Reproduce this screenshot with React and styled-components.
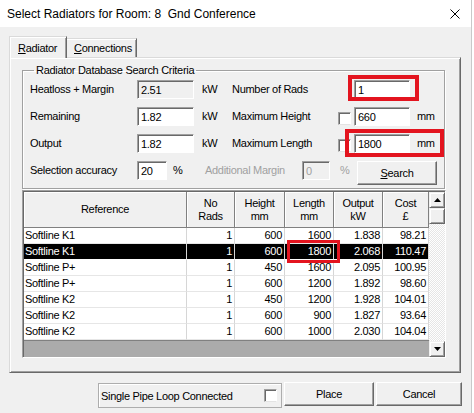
import React from 'react'
import styled, { createGlobalStyle } from 'styled-components'

const GlobalStyle = createGlobalStyle`
  html, body {
    margin: 0;
    padding: 0;
    background: #fff;
  }
  body {
    font-family: "Liberation Sans", Arial, sans-serif;
    font-size: 11px;
    letter-spacing: -0.3px;
    color: #000;
  }
`

const Window = styled.div`
  width: 472px;
  height: 413px;
  box-sizing: border-box;
  background: #f0f0f0;
  border-right: 1px solid #c9c9c9;
  display: flex;
  flex-direction: column;
  overflow: hidden;
`

const TitleBar = styled.div`
  flex: none;
  height: 27px;
  background: #fff;
  display: flex;
  align-items: center;
  justify-content: space-between;
  padding: 0 11px 0 7px;
  font-size: 12px;
  letter-spacing: 0;
  white-space: pre;
`

const Content = styled.div`
  padding: 9px 0 0 9px;
`

const TabRow = styled.div`
  display: flex;
  align-items: flex-start;
  height: 21px;
`

const Tab = styled.div`
  position: relative;
  z-index: ${p => (p.$active ? 1 : 0)};
  box-sizing: border-box;
  width: ${p => p.$w}px;
  height: ${p => (p.$active ? 22 : 19)}px;
  margin-top: ${p => (p.$active ? 0 : 2)}px;
  padding: ${p => (p.$active ? '4px 0 0 8px' : '2px 0 0 7px')};
  line-height: 14px;
  background: #f0f0f0;
  border-top: 1px solid #dadada;
  border-left: ${p => (p.$active ? '1px solid #dadada' : 'none')};
  border-right: 1px solid #696969;
  box-shadow: ${p => (p.$active ? 'inset 1px 1px 0 #fff, inset -1px 0 0 #a0a0a0' : 'inset 0 1px 0 #fff, inset -1px 0 0 #a0a0a0')};
`

const Panel = styled.div`
  box-sizing: border-box;
  width: 452px;
  height: 316px;
  padding: 6px 0 0 12px;
  border-top: 1px solid #dadada;
  border-left: 1px solid #dadada;
  border-right: 1px solid #696969;
  border-bottom: 1px solid #696969;
  box-shadow: inset 1px 1px 0 #fff, inset -1px -1px 0 #a0a0a0;
`

const GroupBox = styled.fieldset`
  box-sizing: border-box;
  width: 423px;
  margin: 0;
  padding: 3px 0 3px 7px;
  border: 1px solid #a0a0a0;
  box-shadow: inset 1px 1px 0 #fff, 1px 1px 0 #fff;
  min-inline-size: 0;
`

const Legend = styled.legend`
  margin-left: 4px;
  padding: 0 2px;
  line-height: 13px;
`

const Rows = styled.div`
  display: flex;
  flex-direction: column;
  gap: 8px;
`

const FieldRow = styled.div`
  display: grid;
  grid-template-columns: 107px 57px 38px 106px 16px auto;
  align-items: center;
  justify-items: start;
  height: 19px;
`

const BottomRow = styled.div`
  display: flex;
  align-items: flex-start;
  height: 24px;
`

const Label = styled.span`
  display: block;
  width: ${p => (p.$w ? `${p.$w}px` : 'auto')};
  line-height: 19px;
  padding-left: ${p => p.$pad || 0}px;
  box-sizing: border-box;
  color: ${p => (p.$disabled ? '#a0a0a0' : '#000')};
  white-space: nowrap;
`

const Field = styled.div`
  box-sizing: border-box;
  width: ${p => p.$w}px;
  height: 19px;
  padding: 1px 0 0 3px;
  line-height: 16px;
  border-top: 1px solid #a0a0a0;
  border-left: 1px solid #a0a0a0;
  border-right: 1px solid #fff;
  border-bottom: 1px solid #fff;
  box-shadow: inset 1px 1px 0 #696969;
  background: ${p => (p.$flat ? '#f0f0f0' : '#fff')};
  color: ${p => (p.$disabled ? '#a0a0a0' : '#000')};
`

const Check = styled.span`
  display: block;
  box-sizing: border-box;
  width: 13px;
  height: 13px;
  margin-top: ${p => p.$drop || 0}px;
  background: #fff;
  border-top: 1px solid #a0a0a0;
  border-left: 1px solid #a0a0a0;
  border-right: 1px solid #fff;
  border-bottom: 1px solid #e3e3e3;
  box-shadow: inset 1px 1px 0 #696969;
`

const Marked = styled.div`
  position: relative;
  display: flex;
  align-items: center;
`

const Ring = styled.span`
  position: absolute;
  top: ${p => p.$t}px;
  right: ${p => p.$r}px;
  bottom: ${p => p.$b}px;
  left: ${p => p.$l}px;
  border: ${p => p.$w || 4}px solid #e3141f;
  pointer-events: none;
  z-index: 2;
`

const Button = styled.button`
  box-sizing: border-box;
  width: ${p => p.$w}px;
  height: 24px;
  margin: 0;
  padding: 0;
  font: inherit;
  letter-spacing: inherit;
  color: #000;
  background: #f0f0f0;
  border-top: 1px solid #fff;
  border-left: 1px solid #fff;
  border-right: 1px solid #696969;
  border-bottom: 1px solid #696969;
  box-shadow: inset -1px -1px 0 #a0a0a0;
`

const List = styled.div`
  box-sizing: border-box;
  width: 424px;
  height: 168px;
  margin-top: 1px;
  padding: 1px 0 0 1px;
  display: flex;
  border-top: 1px solid #a0a0a0;
  border-left: 1px solid #a0a0a0;
  border-right: 1px solid #fff;
  border-bottom: 1px solid #fff;
  box-shadow: inset 1px 1px 0 #696969;
`

const Table = styled.div`
  width: 405px;
  display: grid;
  grid-template-columns: 163px 48px 50px 49px 49px 46px;
  grid-template-rows: 36px repeat(7, 16px) 1fr;
  overflow: hidden;
`

const HeadCell = styled.div`
  box-sizing: border-box;
  display: flex;
  flex-direction: column;
  align-items: center;
  justify-content: center;
  line-height: 13px;
  text-align: center;
  background: #f0f0f0;
  border-right: 1px solid #808080;
  border-bottom: 1px solid #808080;
  box-shadow: inset 1px 1px 0 #fff;
`

const Cell = styled.div`
  position: relative;
  box-sizing: border-box;
  height: 16px;
  line-height: 15px;
  padding: ${p => (p.$left ? '0 0 0 1px' : '0 2px 0 0')};
  text-align: ${p => (p.$left ? 'left' : 'right')};
  white-space: nowrap;
  background: ${p => (p.$sel ? '#000' : '#fff')};
  color: ${p => (p.$sel ? '#fff' : '#000')};
  border-right: 1px solid #d6d6d6;
  border-bottom: 1px solid ${p => (p.$sel ? '#fff' : '#e6e6e6')};
`

const Filler = styled.div`
  grid-column: 1 / -1;
  background: #ababab;
  border-top: 1px solid #808080;
`

const ScrollBar = styled.div`
  width: 16px;
  display: flex;
  flex-direction: column;
`

const ScrollBtn = styled.div`
  box-sizing: border-box;
  height: 16px;
  display: flex;
  align-items: center;
  justify-content: center;
  background: #f0f0f0;
  border-top: 1px solid #f0f0f0;
  border-left: 1px solid #f0f0f0;
  border-right: 1px solid #696969;
  border-bottom: 1px solid #696969;
  box-shadow: inset 1px 1px 0 #fff, inset -1px -1px 0 #a0a0a0;
`

const Track = styled.div`
  flex: 1;
  background: repeating-conic-gradient(#fff 0 25%, #e6e6e6 0 50%) 0 0 / 2px 2px;
`

const Footer = styled.div`
  display: flex;
  align-items: flex-start;
  gap: 2px;
  margin-top: 9px;
  padding-left: 89px;
`

const CheckFrame = styled.div`
  box-sizing: border-box;
  width: 184px;
  height: 25px;
  margin-top: 1px;
  padding: 0 4px 0 2px;
  display: flex;
  align-items: center;
  justify-content: space-between;
  border: 1px solid #adadad;
  box-shadow: inset 1px 1px 0 #fff;
`

const Arrow = ({ down }) => (
  <svg width="7" height="4" viewBox="0 0 7 4">
    <polygon points={down ? '0,0 7,0 3.5,4' : '0,4 7,4 3.5,0'} fill="#000" />
  </svg>
)

const heads = [['Reference'], ['No', 'Rads'], ['Height', 'mm'], ['Length', 'mm'], ['Output', 'kW'], ['Cost', '£']]

const rows = [
  ['Softline K1', 1, 600, 1600, '1.838', '98.21'],
  ['Softline K1', 1, 600, 1800, '2.068', '110.47'],
  ['Softline P+', 1, 450, 1600, '2.095', '100.95'],
  ['Softline P+', 1, 600, 1200, '1.892', '98.60'],
  ['Softline K2', 1, 450, 1200, '1.928', '104.01'],
  ['Softline K2', 1, 600, 900, '1.827', '93.64'],
  ['Softline K2', 1, 600, 1000, '2.030', '104.04'],
]
const selected = 1

export default function App() {
  return (
    <>
      <GlobalStyle />
      <Window>
        <TitleBar>
          <span>Select Radiators for Room: 8  Gnd Conference</span>
          <svg width="10" height="10" viewBox="0 0 10 10">
            <path d="M0.5 0.5 L9.5 9.5 M9.5 0.5 L0.5 9.5" stroke="#000" strokeWidth="1" />
          </svg>
        </TitleBar>
        <Content>
          <TabRow>
            <Tab $active $w={58}><u>R</u>adiator</Tab>
            <Tab $w={70}><u>C</u>onnections</Tab>
          </TabRow>
          <Panel>
            <GroupBox>
              <Legend>Radiator Database Search Criteria</Legend>
              <Rows>
                <FieldRow>
                  <Label>Heatloss + Margin</Label>
                  <Field $w={57} $flat>2.51</Field>
                  <Label $pad={8}>kW</Label>
                  <Label>Number of Rads</Label>
                  <span />
                  <Marked>
                    <Field $w={56}>1</Field>
                    <Ring $t={-5} $r={-9} $b={-2} $l={-6} />
                  </Marked>
                </FieldRow>
                <FieldRow>
                  <Label>Remaining</Label>
                  <Field $w={57}>1.82</Field>
                  <Label $pad={8}>kW</Label>
                  <Label>Maximum Height</Label>
                  <Check $drop={3} />
                  <Marked>
                    <Field $w={56}>660</Field>
                    <Label $pad={7}>mm</Label>
                  </Marked>
                </FieldRow>
                <FieldRow>
                  <Label>Output</Label>
                  <Field $w={57}>1.82</Field>
                  <Label $pad={8}>kW</Label>
                  <Label>Maximum Length</Label>
                  <Check $drop={3} />
                  <Marked>
                    <Field $w={56}>1800</Field>
                    <Label $pad={7}>mm</Label>
                    <Ring $t={-5} $r={-9} $b={-4} $l={-9} />
                  </Marked>
                </FieldRow>
                <BottomRow>
                  <Label $w={107}>Selection accuracy</Label>
                  <Field $w={30}>20</Field>
                  <Label $w={38} $pad={6}>%</Label>
                  <Label $w={97} $disabled>Additional Margin</Label>
                  <Field $w={28} $flat $disabled>0</Field>
                  <Label $w={27} $pad={10} $disabled>%</Label>
                  <Button $w={80}><u>S</u>earch</Button>
                </BottomRow>
              </Rows>
            </GroupBox>
            <List>
              <Table>
                {heads.map((h, i) => (
                  <HeadCell key={i}>
                    {h.map(t => <span key={t}>{t}</span>)}
                  </HeadCell>
                ))}
                {rows.map((r, ri) =>
                  r.map((v, ci) => (
                    <Cell key={`${ri}-${ci}`} $left={ci === 0} $sel={ri === selected}>
                      {v}
                      {ri === selected && ci === 3 && <Ring $t={-4} $r={-7} $b={-4} $l={2} $w={3} />}
                    </Cell>
                  ))
                )}
                <Filler />
              </Table>
              <ScrollBar>
                <ScrollBtn><Arrow /></ScrollBtn>
                <ScrollBtn />
                <Track />
                <ScrollBtn><Arrow down /></ScrollBtn>
              </ScrollBar>
            </List>
          </Panel>
          <Footer>
            <CheckFrame>
              <span>Single Pipe Loop Connected</span>
              <Check />
            </CheckFrame>
            <Button $w={90}>Place</Button>
            <Button $w={86}>Cancel</Button>
          </Footer>
        </Content>
      </Window>
    </>
  )
}
